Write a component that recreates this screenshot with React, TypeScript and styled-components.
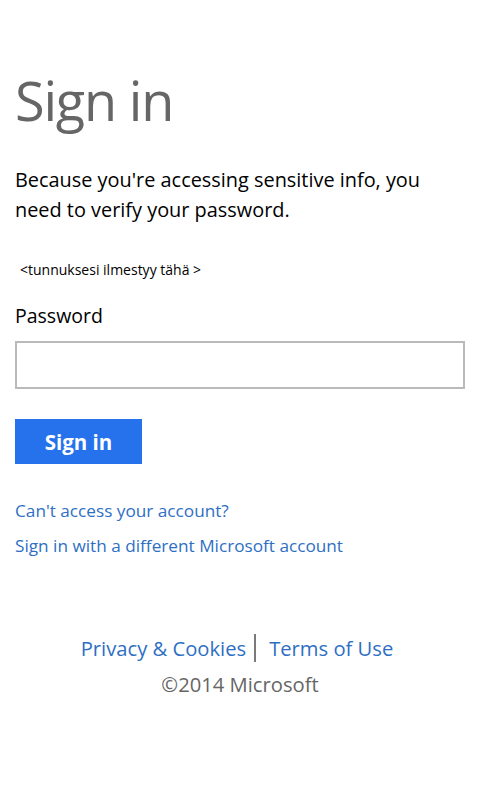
import styled, { createGlobalStyle } from "styled-components";

const GlobalStyle = createGlobalStyle`
  html, body {
    margin: 0;
    padding: 0;
    background: #fff;
  }
  body {
    font-family: "Segoe UI", "Open Sans", "Liberation Sans", sans-serif;
    color: #000;
  }
`;

export default function App() {
  return (
    <>
      <GlobalStyle />
      <Page>
        <Title>Sign in</Title>
        <Intro>Because you're accessing sensitive info, you need to verify your password.</Intro>
        <UserHint>&lt;tunnuksesi ilmestyy tähä &gt;</UserHint>
        <Label htmlFor="pwd">Password</Label>
        <PasswordInput id="pwd" type="password" />
        <SubmitButton type="button">Sign in</SubmitButton>
        <LinkList>
          <TextLink href="#">Can't access your account?</TextLink>
          <TextLink href="#">Sign in with a different Microsoft account</TextLink>
        </LinkList>
        <Footer>
          <FooterLinks>
            <FooterLink href="#">Privacy &amp; Cookies</FooterLink>
            <Divider />
            <FooterLink href="#">Terms of Use</FooterLink>
          </FooterLinks>
          <Copyright>©2014 Microsoft</Copyright>
        </Footer>
      </Page>
    </>
  );
}

const Page = styled.div`
  display: flex;
  flex-direction: column;
  align-items: flex-start;
  width: 480px;
  min-height: 800px;
  box-sizing: border-box;
  padding: 62px 15px 0 15px;
`;

const Title = styled.h1`
  margin: 0;
  font-size: 54px;
  font-weight: 400;
  line-height: 76px;
  color: #666;
  letter-spacing: -1.2px;
`;

const Intro = styled.p`
  margin: 27px 0 0 0;
  font-size: 19.9px;
  line-height: 30px;
  color: #000;
  max-width: 440px;
`;

const UserHint = styled.div`
  margin: 35px 0 0 5px;
  font-size: 14px;
  line-height: 20px;
  color: #000;
`;

const Label = styled.label`
  margin-top: 23px;
  font-size: 19.5px;
  line-height: 26px;
  color: #000;
`;

const PasswordInput = styled.input`
  margin-top: 12px;
  width: 450px;
  height: 48px;
  box-sizing: border-box;
  border: 2px solid #bababa;
  outline: none;
  padding: 0 8px;
  background: #fff;
`;

const SubmitButton = styled.button`
  margin-top: 30px;
  width: 127px;
  height: 45px;
  border: none;
  background: #2672ec;
  color: #fff;
  font-family: inherit;
  font-size: 20.5px;
  font-weight: 700;
  padding: 0;
  cursor: pointer;
`;

const LinkList = styled.div`
  display: flex;
  flex-direction: column;
  gap: 11px;
  margin-top: 35px;
`;

const TextLink = styled.a`
  font-size: 17.2px;
  line-height: 24px;
  color: #2e6fc4;
  text-decoration: none;
`;

const Footer = styled.div`
  align-self: stretch;
  display: flex;
  flex-direction: column;
  align-items: center;
  margin-top: 76px;
  padding-right: 6px;
  gap: 8px;
`;

const FooterLinks = styled.div`
  display: flex;
  align-items: center;
`;

const FooterLink = styled.a`
  font-size: 20.2px;
  line-height: 28px;
  color: #2e6fc4;
  text-decoration: none;
`;

const Divider = styled.span`
  display: block;
  width: 2px;
  height: 28px;
  margin: 0 13px 0 8px;
  background: #7a7a7a;
`;

const Copyright = styled.div`
  font-size: 20.2px;
  line-height: 28px;
  color: #666;
  margin-left: 6px;
`;
